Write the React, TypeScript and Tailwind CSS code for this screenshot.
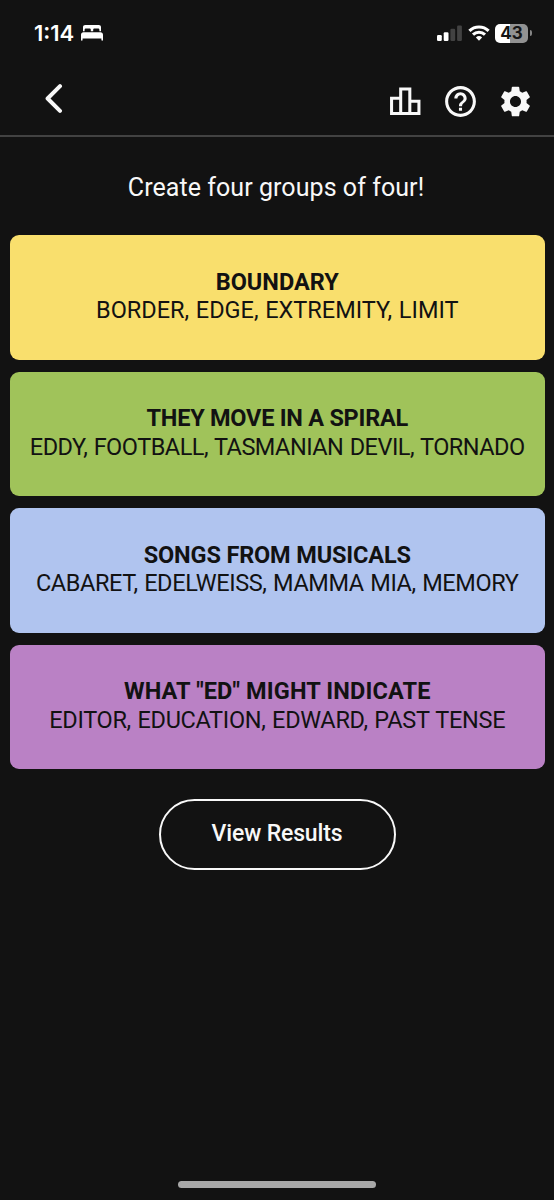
import { MdHelpOutline, MdOutlineLeaderboard, MdSettings } from "react-icons/md";

interface Group {
  title: string;
  words: string;
  color: string;
  titleTracking: string;
  wordsTracking: string;
}

const GROUPS: Group[] = [
  {
    title: "BOUNDARY",
    words: "BORDER, EDGE, EXTREMITY, LIMIT",
    color: "bg-[#f9df6d]",
    titleTracking: "tracking-[0px]",
    wordsTracking: "tracking-[0px] [word-spacing:0.8px]",
  },
  {
    title: "THEY MOVE IN A SPIRAL",
    words: "EDDY, FOOTBALL, TASMANIAN DEVIL, TORNADO",
    color: "bg-[#a0c35a]",
    titleTracking: "tracking-[-0.25px]",
    wordsTracking: "tracking-[-0.5px] [word-spacing:1px]",
  },
  {
    title: "SONGS FROM MUSICALS",
    words: "CABARET, EDELWEISS, MAMMA MIA, MEMORY",
    color: "bg-[#b0c4ef]",
    titleTracking: "tracking-[-0.15px]",
    wordsTracking: "tracking-[-0.38px] [word-spacing:1px]",
  },
  {
    title: 'WHAT "ED" MIGHT INDICATE',
    words: "EDITOR, EDUCATION, EDWARD, PAST TENSE",
    color: "bg-[#ba81c5]",
    titleTracking: "tracking-[0.13px]",
    wordsTracking: "tracking-[-0.3px] [word-spacing:1px]",
  },
];

function BedIcon() {
  return (
    <svg width="22" height="16" viewBox="0 0 22 16" fill="white">
      <path d="M2 6.3V2.2C2 .9 2.9 0 4.2 0h13.6C19.1 0 20 .9 20 2.2v4.1h-1.6V5c0-.9-.6-1.4-1.4-1.4h-3.4c-.9 0-1.4.5-1.4 1.4v1.3H9.8V5c0-.9-.5-1.4-1.4-1.4H5c-.8 0-1.4.5-1.4 1.4v1.3z" />
      <path d="M2.4 7.3h17.2c1.4 0 2.4 1 2.4 2.4v5.1c0 .6-.3.9-.8.9s-.8-.3-.8-.9v-1.3H1.6v1.3c0 .6-.3.9-.8.9s-.8-.3-.8-.9V9.7c0-1.4 1-2.4 2.4-2.4z" />
    </svg>
  );
}

function SignalIcon() {
  return (
    <svg width="26" height="17" viewBox="0 0 26 17">
      <rect x="0" y="10" width="4.8" height="6" rx="1.2" fill="#fff" />
      <rect x="6.7" y="7.3" width="4.8" height="8.7" rx="1.2" fill="#fff" />
      <rect x="13.4" y="3.8" width="4.8" height="12.2" rx="1.2" fill="#424242" />
      <rect x="20.1" y="0.4" width="4.8" height="15.6" rx="1.2" fill="#424242" />
    </svg>
  );
}

function WifiIcon() {
  return (
    <svg width="22" height="16" viewBox="0 0 22 16" fill="none" stroke="white" strokeWidth="3.1">
      <path d="M1.4 5.9a13.8 13.8 0 0 1 19.2 0" />
      <path d="M5 9.7a8.7 8.7 0 0 1 12 0" />
      <path d="M11 15.8l-3.1-3.3a4.5 4.5 0 0 1 6.2 0z" fill="white" stroke="none" />
    </svg>
  );
}

function Battery() {
  return (
    <div className="flex items-center gap-[1.5px]">
      <div className="flex h-[19px] w-[33px] items-center justify-center rounded-[5px] bg-[linear-gradient(90deg,#fff_46%,#929292_46%)] font-['Inter',sans-serif] text-[17px] font-bold leading-none text-[#151515]">
        43
      </div>
      <div className="h-[6px] w-[2px] rounded-r-full bg-[#858585]" />
    </div>
  );
}

function StatusBar() {
  return (
    <div className="flex h-[66px] justify-between pl-[34px] pr-[22.5px]">
      <div className="flex h-[66px] items-center gap-[7px]">
        <span className="font-['Inter',sans-serif] text-[22px] font-semibold leading-none text-white">1:14</span>
        <BedIcon />
      </div>
      <div className="flex h-[66px] items-center">
        <SignalIcon />
        <div className="ml-[5px] mr-[5px]">
          <WifiIcon />
        </div>
        <Battery />
      </div>
    </div>
  );
}

function Header() {
  return (
    <header className="flex h-[71px] items-center justify-between border-b-2 border-[#424242] pl-[43.5px] pr-[20px] text-[#f8f8f8]">
      <button aria-label="Back" className="pb-[4px]">
        <svg width="20" height="29" viewBox="0 0 20 29" fill="none" stroke="currentColor" strokeWidth="4" strokeLinecap="round" strokeLinejoin="round">
          <path d="M16 2.2L3.6 14.5L16 26.8" />
        </svg>
      </button>
      <div className="flex items-center gap-[18.5px] pt-[1px]">
        <MdOutlineLeaderboard size={36.5} />
        <MdHelpOutline size={37} />
        <MdSettings size={37} />
      </div>
    </header>
  );
}

function GroupCard({ group }: { group: Group }) {
  return (
    <section
      className={`flex h-[124.5px] flex-col items-center justify-center whitespace-nowrap rounded-[9px] pb-[2px] text-[23.5px] leading-[28.4px] text-[#121212] ${group.color}`}
    >
      <h2 className={`font-bold ${group.titleTracking}`}>{group.title}</h2>
      <p className={group.wordsTracking}>{group.words}</p>
    </section>
  );
}

export default function App() {
  return (
    <div className="flex h-[1200px] w-[554px] flex-col overflow-hidden bg-[#121212] font-['Roboto',sans-serif]">
      <StatusBar />
      <Header />
      <p className="h-[98px] pr-[2px] pt-[35px] text-center text-[25px] leading-[32px] tracking-[0.06px] text-[#f8f8f8]">
        Create four groups of four!
      </p>
      <main className="flex flex-col gap-[12px] pl-[10px] pr-[9.5px]">
        {GROUPS.map((group) => (
          <GroupCard key={group.title} group={group} />
        ))}
      </main>
      <button className="mt-[30px] h-[71px] w-[237px] self-center rounded-full border-2 border-[#f8f8f8] text-[23px] font-medium tracking-[-0.15px] text-[#f8f8f8]">
        View Results
      </button>
      <div className="mt-auto mb-[12px] h-[7px] w-[198px] self-center rounded-full bg-[#a8a8a8]" />
    </div>
  );
}
